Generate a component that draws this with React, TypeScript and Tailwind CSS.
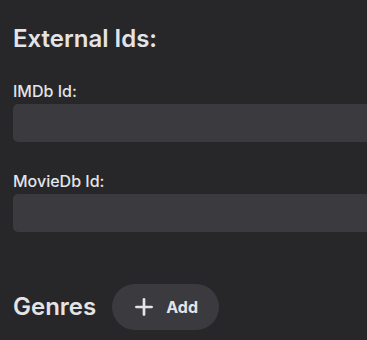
import { Plus } from 'lucide-react'

function Field({ label }: { label: string }) {
  return (
    <div className="flex flex-col gap-[3px]">
      <label className="text-[16px] font-medium leading-5 text-[#e4e4e7]">{label}</label>
      <input className="h-[38px] w-[400px] rounded-[5px] bg-[#3a3a3f] px-3 text-[15px] text-[#e4e4e7] outline-none" />
    </div>
  )
}

export default function App() {
  return (
    <div
      className="h-[340px] w-[367px] overflow-hidden bg-[#27272a] pl-[13px] pt-[23px]"
      style={{ fontFamily: 'Inter, "Noto Sans", sans-serif' }}
    >
      <h2 className="text-[24px] font-semibold leading-8 text-[#e4e4e7]">External Ids:</h2>
      <div className="mt-[26px] flex flex-col gap-[29px]">
        <Field label="IMDb Id:" />
        <Field label="MovieDb Id:" />
      </div>
      <div className="mt-[52px] flex items-center gap-4">
        <h2 className="text-[24px] font-semibold leading-8 text-[#e4e4e7]">Genres</h2>
        <button className="flex h-[46px] items-center gap-[9px] rounded-full bg-[#3a3a3f] pl-[19px] pr-[21px] text-[16px] font-bold text-[#e4e4e7]">
          <Plus size={26} strokeWidth={2.5} />
          Add
        </button>
      </div>
    </div>
  )
}
